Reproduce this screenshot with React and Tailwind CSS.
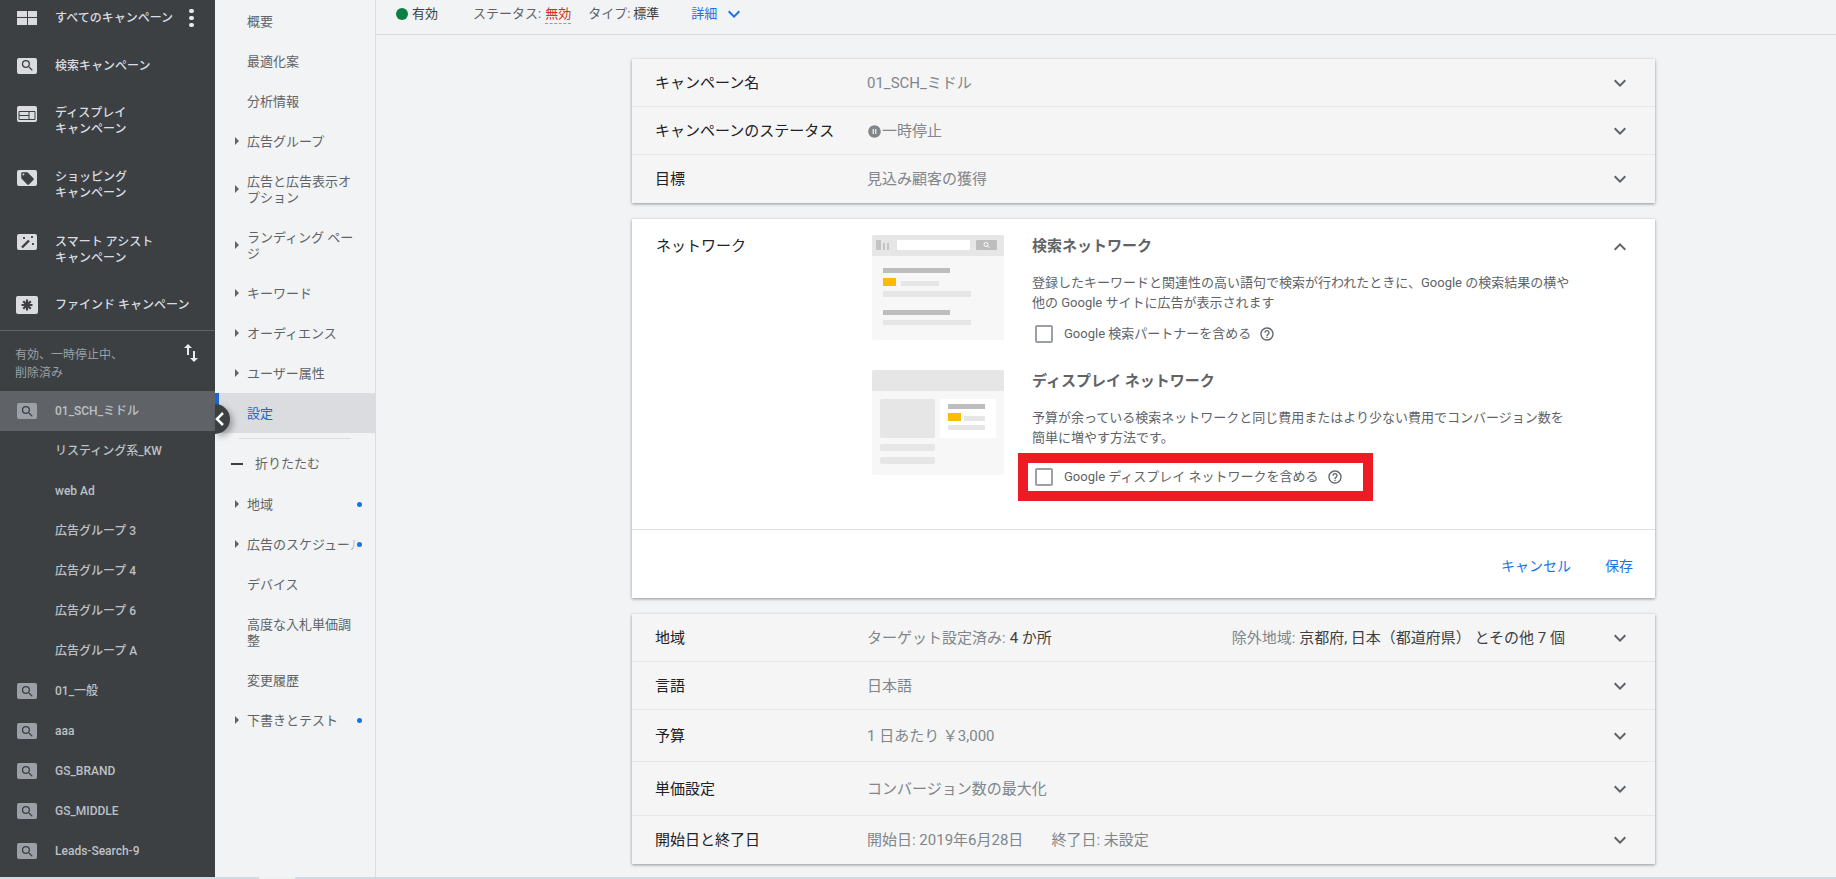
import React from 'react';
import { MdKeyboardArrowDown, MdKeyboardArrowUp, MdHelpOutline, MdSearch, MdLocalOffer, MdSwapVert, MdPauseCircleFilled } from 'react-icons/md';

function SearchBadge({ dim }) {
  return (
    <span className={`flex h-[16px] w-[20px] items-center justify-center rounded-[2px] ${dim ? 'bg-[#9aa0a6]' : 'bg-[#dadce0]'}`}>
      <MdSearch className="text-[#3c4043]" size={15} />
    </span>
  );
}

function GridIcon() {
  return (
    <svg width="20" height="14" viewBox="0 0 20 14">
      <rect x="0" y="0" width="10" height="6" fill="#dadce0" />
      <rect x="11" y="0" width="9" height="6" fill="#dadce0" />
      <rect x="0" y="7" width="10" height="7" fill="#dadce0" />
      <rect x="11" y="7" width="9" height="7" fill="#dadce0" />
    </svg>
  );
}

function DisplayIcon() {
  return (
    <svg width="20" height="16" viewBox="0 0 20 16">
      <rect width="20" height="16" rx="2" fill="#dadce0" />
      <path d="M2 5.500h16v8H2z M2 9.500h10 M12 5.500v8" fill="none" stroke="#3c4043" />
    </svg>
  );
}

function TagIcon() {
  return (
    <span className="flex h-[16px] w-[20px] items-center justify-center rounded-[2px] bg-[#dadce0]">
      <MdLocalOffer className="text-[#3c4043]" size={15} />
    </span>
  );
}

function WandIcon() {
  return (
    <svg width="20" height="16" viewBox="0 0 20 16">
      <rect width="20" height="16" rx="2" fill="#dadce0" />
      <path d="M5 13.500L12 6.500" stroke="#3c4043" strokeWidth="2.400" />
      <path d="M6 3l2 2M8 3L6 5M14 2l2 2M16 2l-2 2M15 9l2 2M17 9l-2 2" stroke="#3c4043" strokeWidth="0.900" />
    </svg>
  );
}

function AsteriskIcon() {
  return (
    <svg width="22" height="18" viewBox="0 0 22 18">
      <rect width="22" height="18" rx="2" fill="#dadce0" />
      <path d="M11 3.500v11M5.500 9h11M7.200 5.200l7.600 7.600M14.800 5.200l-7.600 7.600" stroke="#3c4043" strokeWidth="2.200" />
    </svg>
  );
}

function CampaignNav() {
  const groups = ['リスティング系_KW', 'web Ad', '広告グループ 3', '広告グループ 4', '広告グループ 6', '広告グループ A'];
  const others = ['01_一般', 'aaa', 'GS_BRAND', 'GS_MIDDLE', 'Leads-Search-9'];
  return (
    <aside className="flex h-full w-[215px] shrink-0 flex-col bg-[#3c4043] text-[12px] font-medium leading-[16px] text-[#dadce0]">
      <div className="flex h-[36px] items-center pl-[17px]">
        <span className="flex w-[38px]"><GridIcon /></span>
        <span className="w-[134px] whitespace-nowrap">すべてのキャンペーン</span>
        <span className="flex flex-col gap-[2.500px]">
          <i className="h-[4.500px] w-[4.500px] rounded-full bg-[#e8eaed]" />
          <i className="h-[4.500px] w-[4.500px] rounded-full bg-[#e8eaed]" />
          <i className="h-[4.500px] w-[4.500px] rounded-full bg-[#e8eaed]" />
        </span>
      </div>
      <div className="mt-[7px] flex h-[45px] items-center pl-[17px]">
        <span className="flex w-[38px]"><SearchBadge /></span>検索キャンペーン
      </div>
      <div className="flex h-[64px] items-start pl-[17px] pt-[17px]">
        <span className="mt-[1px] flex w-[38px]"><DisplayIcon /></span>
        <span>ディスプレイ<br />キャンペーン</span>
      </div>
      <div className="flex h-[64px] items-start pl-[17px] pt-[17px]">
        <span className="mt-[1px] flex w-[38px]"><TagIcon /></span>
        <span>ショッピング<br />キャンペーン</span>
      </div>
      <div className="flex h-[64px] items-start pl-[17px] pt-[18px]">
        <span className="flex w-[38px]"><WandIcon /></span>
        <span>スマート アシスト<br />キャンペーン</span>
      </div>
      <div className="flex h-[50px] items-center pl-[16px]">
        <span className="flex w-[39px]"><AsteriskIcon /></span>ファインド キャンペーン
      </div>
      <div className="flex h-[61px] border-t border-[#5f6368] pl-[15px] pt-[15px] font-normal leading-[18px] text-[#9aa0a6]">
        <span className="w-[164px]">有効、一時停止中、<br />削除済み</span>
        <MdSwapVert className="-mt-[5px] text-[#e8eaed]" size={24} />
      </div>
      <div className="flex h-[40px] items-center bg-[#5f6368] pl-[17px] text-[#bdc1c6]">
        <span className="flex w-[38px]"><SearchBadge dim /></span>01_SCH_ミドル
      </div>
      {groups.map((g) => (
        <div key={g} className="flex h-[40px] items-center pl-[55px] text-[#bdc1c6]">{g}</div>
      ))}
      {others.map((o) => (
        <div key={o} className="flex h-[40px] items-center pl-[17px] text-[#bdc1c6]">
          <span className="flex w-[38px]"><SearchBadge dim /></span>{o}
        </div>
      ))}
    </aside>
  );
}

function NavRow({ label, arrow, dot, tall, fade }) {
  return (
    <div className={`relative flex items-center pl-[20px] pr-[12px] ${tall ? 'h-[56px]' : 'h-[40px]'}`}>
      <span className="flex w-[12px] shrink-0">
        {arrow && <i className="h-0 w-0 border-y-[4px] border-l-[4px] border-y-transparent border-l-[#5f6368]" />}
      </span>
      <span className={`pt-[1px] ${fade ? 'whitespace-nowrap' : 'w-[108px]'}`}>{label}</span>
      {fade && <i className="absolute right-[10px] top-0 h-full w-[20px] bg-gradient-to-r from-transparent to-[#f1f3f4] to-70%" />}
      {dot && <i className="absolute left-[142px] top-[18px] h-[5px] w-[5px] rounded-full bg-[#1a73e8]" />}
    </div>
  );
}

function PageNav() {
  return (
    <nav className="relative h-full w-[161px] shrink-0 border-r border-[#dadce0] pt-[1px] text-[13px] leading-[16px] text-[#5f6368]">
      <NavRow label="概要" />
      <NavRow label="最適化案" />
      <NavRow label="分析情報" />
      <NavRow label="広告グループ" arrow />
      <NavRow label="広告と広告表示オプション" arrow tall />
      <NavRow label="ランディング ページ" arrow tall />
      <NavRow label="キーワード" arrow />
      <NavRow label="オーディエンス" arrow />
      <NavRow label="ユーザー属性" arrow />
      <div className="flex h-[40px] items-center border-l-[4px] border-[#1967d2] bg-[#dadce0] pl-[28px] pt-[1px] text-[#1967d2]">設定</div>
      <div className="ml-[24px] mt-[5px] h-px w-[112px] bg-[#dadce0]" />
      <div className="mt-[4px] flex h-[41px] items-center pl-[16px]">
        <i className="mr-[12px] h-[2px] w-[12px] bg-[#3c4043]" />折りたたむ
      </div>
      <NavRow label="地域" arrow dot />
      <NavRow label="広告のスケジュール" arrow dot fade />
      <NavRow label="デバイス" />
      <NavRow label="高度な入札単価調整" tall />
      <NavRow label="変更履歴" />
      <NavRow label="下書きとテスト" arrow dot />
      <button className="absolute left-0 top-[404px] h-[30px] w-[15px] rounded-r-full bg-[#3c4043] shadow-[3px_3px_6px_rgba(0,0,0,0.3)]">
        <svg width="15" height="30" viewBox="0 0 15 30">
          <path d="M8 9l-6 6 6 6" fill="none" stroke="#fff" strokeWidth="2.500" />
        </svg>
      </button>
    </nav>
  );
}

function Row({ label, h, last, children, right }) {
  return (
    <div className={`flex items-center bg-[#f5f5f5] pl-[23px] pr-[23px] text-[15px] ${h} ${last ? '' : 'border-b border-[#e8e8e8]'}`}>
      <span className="w-[212px] shrink-0 pt-[1px] text-[#202124]">{label}</span>
      <span className="flex items-center pt-[1px] text-[#80868b]">{children}</span>
      <span className="ml-auto flex items-center">
        {right}
        <MdKeyboardArrowDown className="ml-[43px] text-[#5f6368]" size={24} />
      </span>
    </div>
  );
}

function Illustration1() {
  return (
    <svg className="shrink-0" width="132" height="105" viewBox="0 0 132 105">
      <rect width="132" height="105" rx="2" fill="#f7f7f7" />
      <path d="M0 21V2a2 2 0 0 1 2-2h128a2 2 0 0 1 2 2v19z" fill="#e6e6e6" />
      <path d="M4 5h5v10H4zM11 8h2v7h-2zM15 8h2v7h-2z" fill="#c4c4c4" />
      <rect x="25" y="5" width="73" height="10" fill="#fff" />
      <rect x="104" y="5" width="21" height="10" rx="1" fill="#bdbdbd" />
      <circle cx="114" cy="9.500" r="2" fill="none" stroke="#fff" />
      <path d="M115.500 11l2 2" stroke="#fff" />
      <rect x="11" y="33" width="67" height="5" fill="#bdbdbd" />
      <rect x="11" y="43" width="13" height="8" fill="#fbbc04" />
      <rect x="29" y="46" width="38" height="5" fill="#e6e6e6" />
      <rect x="11" y="56" width="88" height="6" fill="#e6e6e6" />
      <rect x="11" y="75" width="67" height="5" fill="#bdbdbd" />
      <rect x="11" y="85" width="88" height="5" fill="#e6e6e6" />
    </svg>
  );
}

function Illustration2() {
  return (
    <svg className="shrink-0" width="132" height="105" viewBox="0 0 132 105">
      <rect width="132" height="105" rx="2" fill="#f7f7f7" />
      <path d="M0 21V2a2 2 0 0 1 2-2h128a2 2 0 0 1 2 2v19z" fill="#e6e6e6" />
      <rect x="8" y="29" width="55" height="39" rx="2" fill="#e6e6e6" />
      <rect x="68" y="29" width="56" height="39" fill="#fff" />
      <rect x="76" y="34" width="37" height="5" fill="#bdbdbd" />
      <rect x="76" y="43" width="13" height="8" fill="#fbbc04" />
      <rect x="92" y="46" width="21" height="5" fill="#e6e6e6" />
      <rect x="76" y="55" width="37" height="5" fill="#e6e6e6" />
      <rect x="8" y="74" width="55" height="7" rx="2" fill="#e6e6e6" />
      <rect x="8" y="87" width="55" height="7" rx="2" fill="#e6e6e6" />
    </svg>
  );
}

function CheckRow({ label, className }) {
  return (
    <div className={`flex items-center pl-[3px] text-[13px] leading-[18px] text-[#5f6368] ${className}`}>
      <i className="h-[18px] w-[18px] shrink-0 rounded-[2px] border-2 border-[#9aa0a6]" />
      <span className="ml-[11px] whitespace-nowrap">{label}</span>
      <MdHelpOutline className="ml-[8px] text-[#5f6368]" size={16} />
    </div>
  );
}

function NetworkCard() {
  return (
    <section className="mt-[16px] h-[379px] bg-white shadow-[0_1px_3px_rgba(0,0,0,0.4)]">
      <div className="flex h-[311px] border-b border-[#e0e0e0] pl-[24px] pr-[23px] pt-[16px]">
        <span className="w-[216px] shrink-0 pt-[1px] text-[15px] leading-[20px] text-[#202124]">ネットワーク</span>
        <div className="flex-1">
          <div className="flex h-[135px]">
            <Illustration1 />
            <div className="ml-[28px] w-[548px] shrink-0">
              <h3 className="pt-[1px] text-[15px] font-bold leading-[20px] text-[#5f6368]">検索ネットワーク</h3>
              <p className="mt-[17px] text-[13px] leading-[20px] text-[#5f6368]">
                登録したキーワードと関連性の高い語句で検索が行われたときに、Google の検索結果の横や<br />
                他の Google サイトに広告が表示されます
              </p>
              <CheckRow className="mt-[12px]" label="Google 検索パートナーを含める" />
            </div>
            <MdKeyboardArrowUp className="ml-auto text-[#5f6368]" size={24} />
          </div>
          <div className="flex h-[135px]">
            <Illustration2 />
            <div className="ml-[28px] w-[548px] shrink-0">
              <h3 className="pt-[1px] text-[15px] font-bold leading-[20px] text-[#5f6368]">ディスプレイ ネットワーク</h3>
              <p className="mt-[17px] text-[13px] leading-[20px] text-[#5f6368]">
                予算が余っている検索ネットワークと同じ費用またはより少ない費用でコンバージョン数を<br />
                簡単に増やす方法です。
              </p>
              <div className="relative">
                <CheckRow className="mt-[20px]" label="Google ディスプレイ ネットワークを含める" />
                <i className="absolute -top-[15px] left-[-14px] h-[48px] w-[355px] border-[10px] border-[#ed1c24]" />
              </div>
            </div>
          </div>
        </div>
      </div>
      <div className="flex h-[68px] items-center justify-end gap-[34px] pr-[22px] pt-[4px] text-[14px] text-[#1a73e8]">
        <span>キャンセル</span>
        <span>保存</span>
      </div>
    </section>
  );
}

export default function App() {
  return (
    <div className="flex h-[879px] w-[1836px] flex-col overflow-hidden bg-[#f1f3f4] font-[Roboto,'Noto_Sans_CJK_JP',sans-serif]">
      <div className="flex h-[877px]">
        <CampaignNav />
        <PageNav />
        <main className="flex-1">
          <div className="flex h-[35px] items-center border-b border-[#dadce0] pb-[6px] pl-[20px] text-[13px] text-[#5f6368]">
            <i className="h-[12px] w-[12px] rounded-full bg-[#0b8043]" />
            <span className="ml-[4px] text-[#3c4043]">有効</span>
            <span className="ml-[35px]">ステータス:</span>
            <span className="ml-[4px] border-b border-dashed border-[#9aa0a6] text-[#d93025]">無効</span>
            <span className="ml-[17px]">タイプ:</span>
            <span className="ml-[3px] text-[#3c4043]">標準</span>
            <span className="ml-[32px] text-[#1a73e8]">詳細</span>
            <MdKeyboardArrowDown className="ml-[5px] text-[#1a73e8]" size={24} />
          </div>
          <div className="ml-[256px] w-[1023px] pt-[24px]">
            <section className="shadow-[0_1px_3px_rgba(0,0,0,0.4)]">
              <Row label="キャンペーン名" h="h-[48px]">01_SCH_ミドル</Row>
              <Row label="キャンペーンのステータス" h="h-[48px]">
                <MdPauseCircleFilled className="text-[#80868b]" size={15} />一時停止
              </Row>
              <Row label="目標" h="h-[48px]" last>見込み顧客の獲得</Row>
            </section>
            <NetworkCard />
            <section className="mt-[16px] shadow-[0_1px_3px_rgba(0,0,0,0.4)]">
              <Row
                label="地域"
                h="h-[48px]"
                right={<span className="pt-[1px] text-[#80868b]">除外地域: <span className="text-[#3c4043]">京都府, 日本（都道府県） とその他 7 個</span></span>}
              >
                ターゲット設定済み: <span className="ml-[4px] text-[#3c4043]">4 か所</span>
              </Row>
              <Row label="言語" h="h-[48px]">日本語</Row>
              <Row label="予算" h="h-[52px]">1 日あたり ￥3,000</Row>
              <Row label="単価設定" h="h-[54px]">コンバージョン数の最大化</Row>
              <Row label="開始日と終了日" h="h-[48px]" last>
                開始日: 2019年6月28日<span className="ml-[28px]">終了日: 未設定</span>
              </Row>
            </section>
          </div>
        </main>
      </div>
      <div className="flex h-[2px]">
        <i className="w-[259px] bg-[#d2dae2]" />
        <i className="w-[36px] bg-[#eef0f2]" />
        <i className="flex-1 bg-[#d2d9e3]" />
      </div>
    </div>
  );
}
